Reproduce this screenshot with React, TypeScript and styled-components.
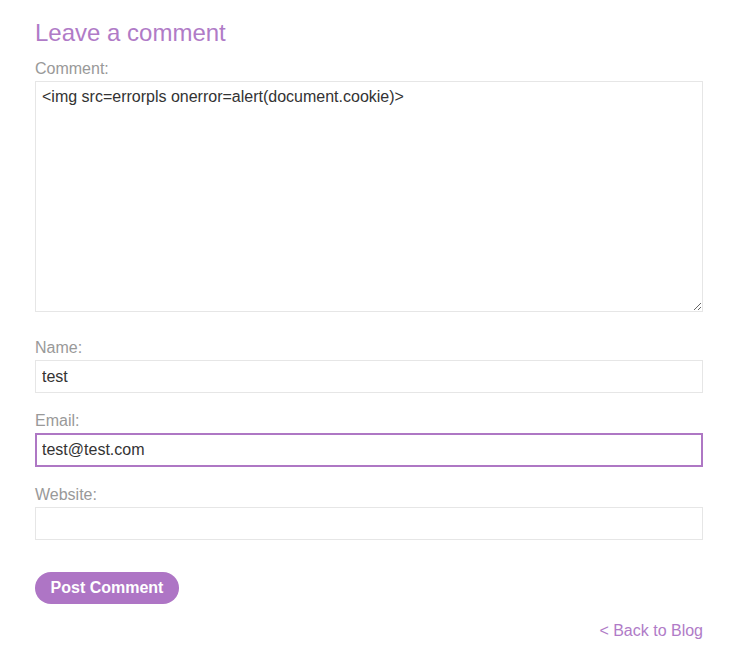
import React from 'react';
import styled, { createGlobalStyle } from 'styled-components';

const GlobalStyle = createGlobalStyle`
  html, body {
    margin: 0;
    padding: 0;
    background: #fff;
  }
  body {
    font-family: 'Liberation Sans', Arial, sans-serif;
  }
`;

const Section = styled.section`
  width: 668px;
  margin-left: 35px;
  padding-top: 18px;
  display: flex;
  flex-direction: column;
`;

const Heading = styled.h1`
  margin: 0 0 11px;
  font-size: 24px;
  line-height: 30px;
  font-weight: normal;
  color: #b07bc7;
`;

const Form = styled.form`
  display: flex;
  flex-direction: column;
`;

const Label = styled.label`
  display: block;
  font-size: 16px;
  line-height: 20px;
  color: #999;
  margin-bottom: 2px;
`;

const Field = styled.div`
  display: flex;
  flex-direction: column;
  margin-bottom: 18px;

  &:first-child {
    margin-bottom: 26px;
  }
`;

const TextArea = styled.textarea`
  box-sizing: border-box;
  width: 100%;
  height: 231px;
  margin: 0;
  padding: 5px 6px;
  border: 1px solid #e6e6e6;
  font-family: 'Liberation Sans', Arial, sans-serif;
  font-size: 16px;
  line-height: 20px;
  color: #333;
  outline: none;
`;

const Input = styled.input<{ $focused?: boolean }>`
  box-sizing: border-box;
  width: 100%;
  height: ${(p) => (p.$focused ? '34px' : '33px')};
  margin: 0;
  padding: 5px ${(p) => (p.$focused ? '5px' : '6px')};
  border: ${(p) => (p.$focused ? '2px solid #ae77c4' : '1px solid #e6e6e6')};
  font-family: 'Liberation Sans', Arial, sans-serif;
  font-size: 16px;
  line-height: 20px;
  color: #333;
  outline: none;
  background: #fff;
`;

const SubmitButton = styled.button`
  align-self: flex-start;
  margin-top: 14px;
  height: 32px;
  width: 144px;
  padding: 0;
  border: none;
  border-radius: 16px;
  background: #ae75c5;
  color: #fff;
  font-family: 'Liberation Sans', Arial, sans-serif;
  font-size: 16px;
  font-weight: bold;
  cursor: pointer;
`;

const Footer = styled.div`
  display: flex;
  justify-content: flex-end;
  margin-top: 17px;
`;

const BackLink = styled.a`
  font-size: 16px;
  line-height: 20px;
  color: #b07bc7;
  text-decoration: none;
`;

const App: React.FC = () => {
  return (
    <>
      <GlobalStyle />
      <Section>
        <Heading>Leave a comment</Heading>
        <Form onSubmit={(e) => e.preventDefault()}>
          <Field>
            <Label htmlFor="comment">Comment:</Label>
            <TextArea
              id="comment"
              defaultValue="<img src=errorpls onerror=alert(document.cookie)>"
            />
          </Field>
          <Field>
            <Label htmlFor="name">Name:</Label>
            <Input id="name" defaultValue="test" />
          </Field>
          <Field>
            <Label htmlFor="email">Email:</Label>
            <Input id="email" $focused defaultValue="test@test.com" />
          </Field>
          <Field>
            <Label htmlFor="website">Website:</Label>
            <Input id="website" />
          </Field>
          <SubmitButton type="submit">Post Comment</SubmitButton>
        </Form>
        <Footer>
          <BackLink href="#">&lt; Back to Blog</BackLink>
        </Footer>
      </Section>
    </>
  );
};

export default App;
